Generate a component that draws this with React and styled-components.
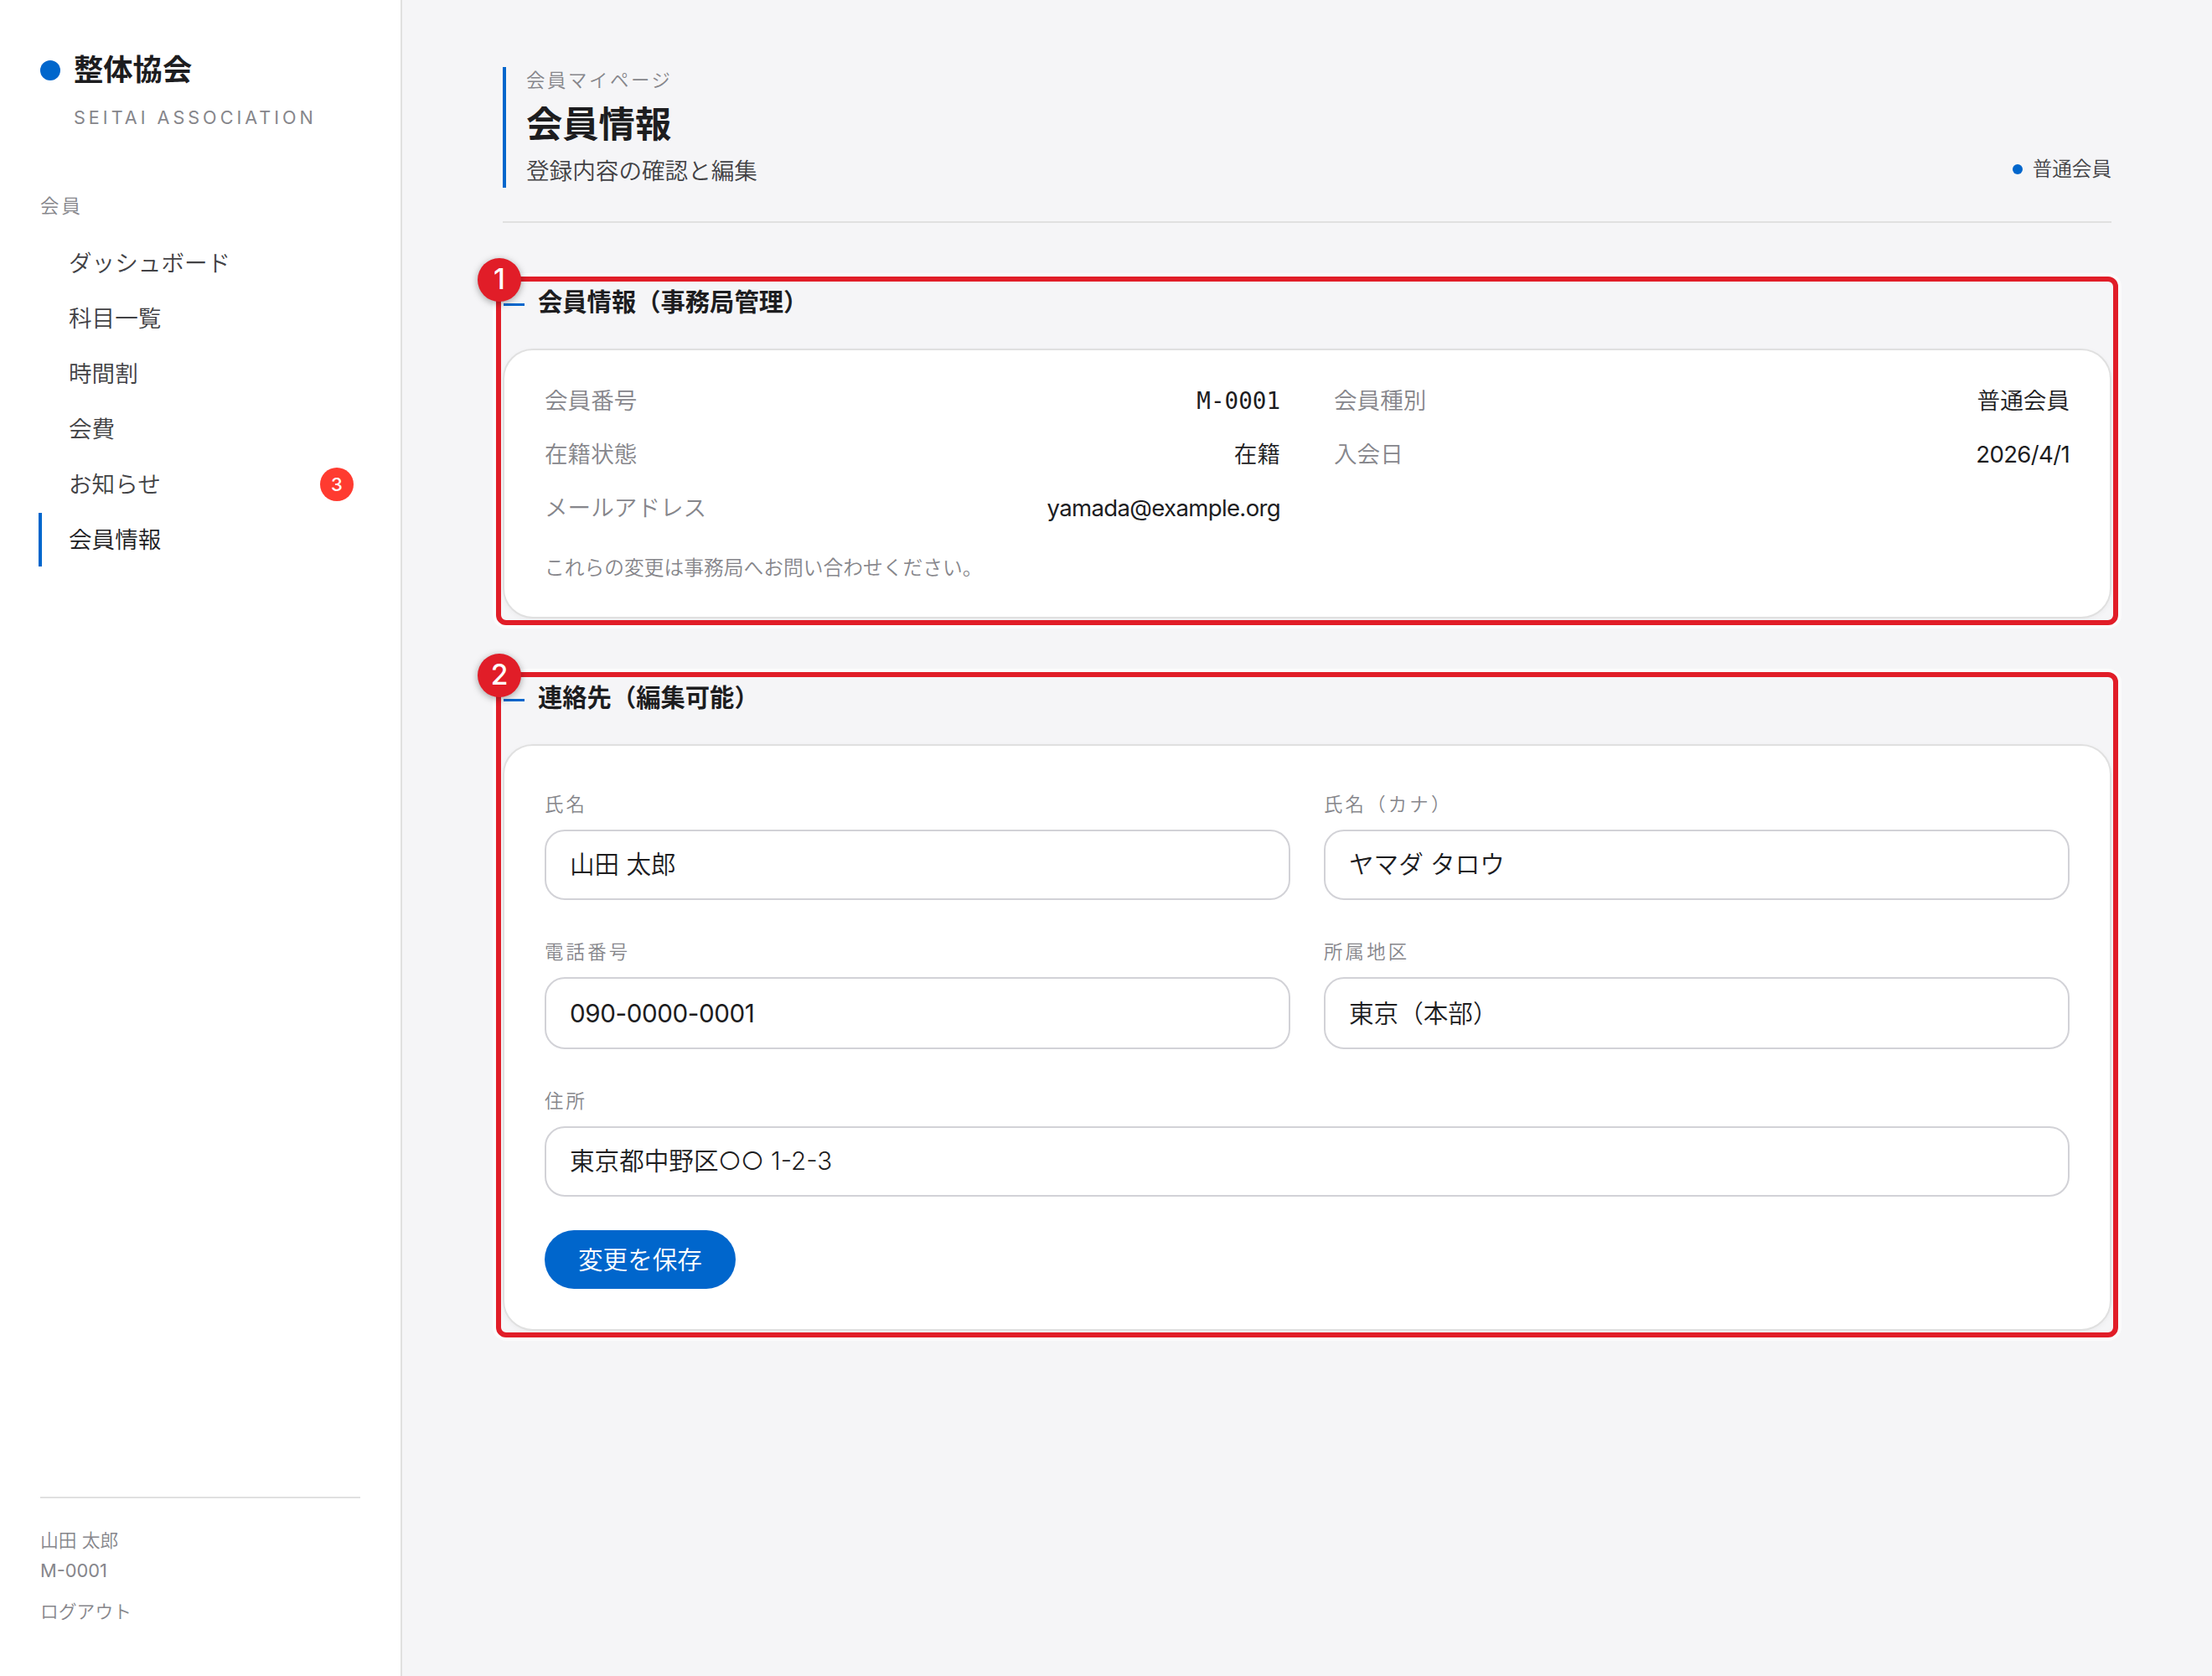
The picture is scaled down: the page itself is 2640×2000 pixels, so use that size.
import React, { useState } from 'react';
import styled, { createGlobalStyle } from 'styled-components';

const GlobalStyle = createGlobalStyle`
  * {
    box-sizing: border-box;
    margin: 0;
    padding: 0;
  }
  body {
    background: #f5f5f7;
    color: #1d1d1f;
    font-family: Inter, 'Noto Sans CJK JP', sans-serif;
    font-size: 27.6px;
    font-weight: 350;
    -webkit-font-smoothing: antialiased;
  }
  input, button {
    font: inherit;
    color: inherit;
  }
`;

const Layout = styled.div`
  display: flex;
  height: 2000px;
`;
const Sidebar = styled.aside`
  width: 480px;
  padding: 58px 48px 59px;
  border-right: 2px solid #e0e0e0;
  background: #fff;
  display: flex;
  flex-direction: column;
`;
const Brand = styled.div`
  display: flex;
  align-items: center;
  gap: 16px;
  height: 52px;
  font-size: 35.3px;
  font-weight: 700;
  line-height: 48px;
`;
const BrandDot = styled.span`
  width: 24px;
  height: 24px;
  border-radius: 50%;
  background: #0066cc;
`;
const BrandSub = styled.div`
  padding-left: 40px;
  margin-top: 12px;
  font-size: 21.6px;
  font-weight: 400;
  letter-spacing: 4px;
  line-height: 36px;
  color: #86868b;
`;
const NavHeading = styled.div`
  margin-top: 70px;
  font-size: 22.4px;
  letter-spacing: 3.2px;
  line-height: 36px;
  color: #86868b;
`;
const Nav = styled.nav`
  display: flex;
  flex-direction: column;
  gap: 2px;
  margin: 18px 0 0 -2px;
`;
const NavItem = styled.a`
  display: flex;
  align-items: center;
  justify-content: space-between;
  height: 64px;
  padding: 0 8px 0 32px;
  border-left: 4px solid ${({ $active }) => ($active ? '#0066cc' : 'transparent')};
  color: ${({ $active }) => ($active ? '#1d1d1f' : '#424245')};
`;
const NavLabel = styled.span`
  padding-bottom: 4px;
`;
const NavBadge = styled.span`
  width: 40px;
  height: 40px;
  border-radius: 50%;
  background: #ff3b30;
  color: #fff;
  font-size: 22px;
  font-weight: 500;
  line-height: 40px;
  text-align: center;
`;
const Account = styled.div`
  margin-top: auto;
  padding-top: 32px;
  border-top: 2px solid #e0e0e0;
  font-size: 21.8px;
  line-height: 36px;
  color: #86868b;
`;
const AccountNumber = styled.div`
  font-weight: 400;
`;
const Logout = styled.a`
  display: block;
  margin-top: 13px;
`;

const Main = styled.main`
  flex: 1;
  padding: 80px 120px;
`;
const PageHeader = styled.header`
  display: flex;
  justify-content: space-between;
  align-items: flex-end;
  padding-bottom: 40px;
  border-bottom: 2px solid #e0e0e0;
`;
const Heading = styled.div`
  height: 144px;
  padding-left: 24px;
  border-left: 4px solid #0066cc;
`;
const Eyebrow = styled.div`
  font-size: 22.4px;
  letter-spacing: 2.6px;
  line-height: 31px;
  color: #86868b;
`;
const Title = styled.h1`
  font-size: 43.3px;
  font-weight: 700;
  line-height: 74px;
`;
const Subtitle = styled.p`
  line-height: 38px;
  color: #424245;
`;
const Status = styled.div`
  display: flex;
  align-items: center;
  gap: 12px;
  height: 44px;
  font-size: 23.6px;
  color: #424245;
`;
const StatusText = styled.span`
  padding-bottom: 5px;
`;
const StatusDot = styled.span`
  width: 12px;
  height: 12px;
  border-radius: 50%;
  background: #0066cc;
`;

const Section = styled.section`
  position: relative;
  margin-top: 72px;
`;
/* numbered callout drawn around a section */
const Callout = styled.div`
  position: absolute;
  inset: -8px;
  border: 6px solid #e11d28;
  border-radius: 12px;
  box-shadow: 0 0 0 4px rgba(255, 255, 255, 0.6);
  pointer-events: none;
`;
const CalloutNumber = styled.span`
  position: absolute;
  top: -28px;
  left: -28px;
  width: 52px;
  height: 52px;
  border-radius: 50%;
  background: #e11d28;
  box-shadow: 0 2px 8px rgba(0, 0, 0, 0.35);
  color: #fff;
  font-size: 33.5px;
  font-weight: 500;
  line-height: 51px;
  text-align: center;
`;
const SectionTitle = styled.h2`
  display: flex;
  align-items: center;
  height: 46px;
  margin-bottom: 32px;
  font-size: 29.3px;
  font-weight: 700;
  line-height: 46px;
  &::before {
    content: '';
    width: 25px;
    height: 3px;
    margin: 4px 16px 0 1px;
    background: #0066cc;
  }
`;
const Card = styled.div`
  height: ${({ $height }) => $height}px;
  padding: ${({ $top }) => $top}px 48px 0;
  border: 2px solid #e0e0e0;
  border-radius: 36px;
  background: #fff;
  box-shadow: 0 2px 6px rgba(0, 0, 0, 0.04);
`;
const Facts = styled.dl`
  display: grid;
  grid-template-columns: 1fr 1fr;
  column-gap: 64px;
`;
const Fact = styled.div`
  display: flex;
  justify-content: space-between;
  line-height: 64px;
`;
const FactLabel = styled.dt`
  color: #86868b;
`;
const FactValue = styled.dd`
  ${({ $kind }) => $kind === 'latin' && `
    font-weight: 400;
    letter-spacing: -0.68px;
  `}
  ${({ $kind }) => $kind === 'mono' && `
    padding-top: 2px;
    font-family: 'DejaVu Sans Mono', monospace;
    line-height: 62px;
  `}
`;
const Note = styled.p`
  margin-top: 22px;
  font-size: 23.75px;
  line-height: 35px;
  color: #86868b;
`;

const Form = styled.form`
  display: grid;
  grid-template-columns: 1fr 1fr;
  column-gap: 40px;
`;
const Field = styled.label`
  display: flex;
  flex-direction: column;
  height: ${({ $height }) => $height}px;
  grid-column: ${({ $wide }) => ($wide ? '1 / -1' : 'auto')};
`;
const FieldLabel = styled.span`
  margin-bottom: 12px;
  font-size: 22.4px;
  letter-spacing: 3.2px;
  line-height: 36px;
  color: #86868b;
`;
const Input = styled.input`
  height: ${({ $height }) => $height}px;
  padding: 0 28px ${({ $bottom }) => $bottom}px;
  border: 2px solid #d2d2d7;
  border-radius: 24px;
  background: #fff;
  font-size: 29.6px;
  outline: none;
  &[type='tel'] {
    font-weight: 400;
    letter-spacing: -0.4px;
  }
`;
const SaveButton = styled.button`
  justify-self: start;
  height: 70px;
  padding: 0 40px 4px;
  border: 0;
  border-radius: 35px;
  background: #0066cc;
  color: #fff;
  font-size: 29.6px;
`;

const navItems = [
  { label: 'ダッシュボード' },
  { label: '科目一覧' },
  { label: '時間割' },
  { label: '会費' },
  { label: 'お知らせ', badge: 3 },
  { label: '会員情報', active: true },
];

const facts = [
  { label: '会員番号', value: 'M-0001', kind: 'mono' },
  { label: '会員種別', value: '普通会員' },
  { label: '在籍状態', value: '在籍' },
  { label: '入会日', value: '2026/4/1', kind: 'latin' },
  { label: 'メールアドレス', value: 'yamada@example.org', kind: 'latin' },
];

const fields = [
  { name: 'name', label: '氏名', height: 176, inputHeight: 84, bottom: 6 },
  { name: 'kana', label: '氏名（カナ）', height: 176, inputHeight: 84, bottom: 6 },
  { name: 'phone', label: '電話番号', type: 'tel', height: 178, inputHeight: 86, bottom: 1 },
  { name: 'area', label: '所属地区', height: 178, inputHeight: 86, bottom: 4 },
  { name: 'address', label: '住所', height: 172, inputHeight: 84, bottom: 5, wide: true },
];

const App = () => {
  const [values, setValues] = useState({
    name: '山田 太郎',
    kana: 'ヤマダ タロウ',
    phone: '090-0000-0001',
    area: '東京（本部）',
    address: '東京都中野区○○ 1-2-3',
  });

  const onChange = ({ target: { name, value } }) => setValues({ ...values, [name]: value });

  return (
    <Layout>
      <GlobalStyle />
      <Sidebar>
        <Brand>
          <BrandDot />
          整体協会
        </Brand>
        <BrandSub>SEITAI ASSOCIATION</BrandSub>
        <NavHeading>会員</NavHeading>
        <Nav>
          {navItems.map(({ label, badge, active }) => (
            <NavItem key={label} $active={active}>
              <NavLabel>{label}</NavLabel>
              {badge && <NavBadge>{badge}</NavBadge>}
            </NavItem>
          ))}
        </Nav>
        <Account>
          <div>山田 太郎</div>
          <AccountNumber>M-0001</AccountNumber>
          <Logout>ログアウト</Logout>
        </Account>
      </Sidebar>
      <Main>
        <PageHeader>
          <Heading>
            <Eyebrow>会員マイページ</Eyebrow>
            <Title>会員情報</Title>
            <Subtitle>登録内容の確認と編集</Subtitle>
          </Heading>
          <Status>
            <StatusDot />
            <StatusText>普通会員</StatusText>
          </Status>
        </PageHeader>
        <Section>
          <SectionTitle>会員情報（事務局管理）</SectionTitle>
          <Card $height={322} $top={28}>
            <Facts>
              {facts.map(({ label, value, kind }) => (
                <Fact key={label}>
                  <FactLabel>{label}</FactLabel>
                  <FactValue $kind={kind}>{value}</FactValue>
                </Fact>
              ))}
            </Facts>
            <Note>これらの変更は事務局へお問い合わせください。</Note>
          </Card>
          <Callout>
            <CalloutNumber>1</CalloutNumber>
          </Callout>
        </Section>
        <Section>
          <SectionTitle>連絡先（編集可能）</SectionTitle>
          <Card $height={700} $top={52}>
            <Form onSubmit={(e) => e.preventDefault()}>
              {fields.map(({ name, label, type, height, inputHeight, bottom, wide }) => (
                <Field key={name} $height={height} $wide={wide}>
                  <FieldLabel>{label}</FieldLabel>
                  <Input
                    type={type || 'text'}
                    name={name}
                    value={values[name]}
                    onChange={onChange}
                    $height={inputHeight}
                    $bottom={bottom}
                  />
                </Field>
              ))}
              <SaveButton type="submit">変更を保存</SaveButton>
            </Form>
          </Card>
          <Callout>
            <CalloutNumber>2</CalloutNumber>
          </Callout>
        </Section>
      </Main>
    </Layout>
  );
};

export default App;
